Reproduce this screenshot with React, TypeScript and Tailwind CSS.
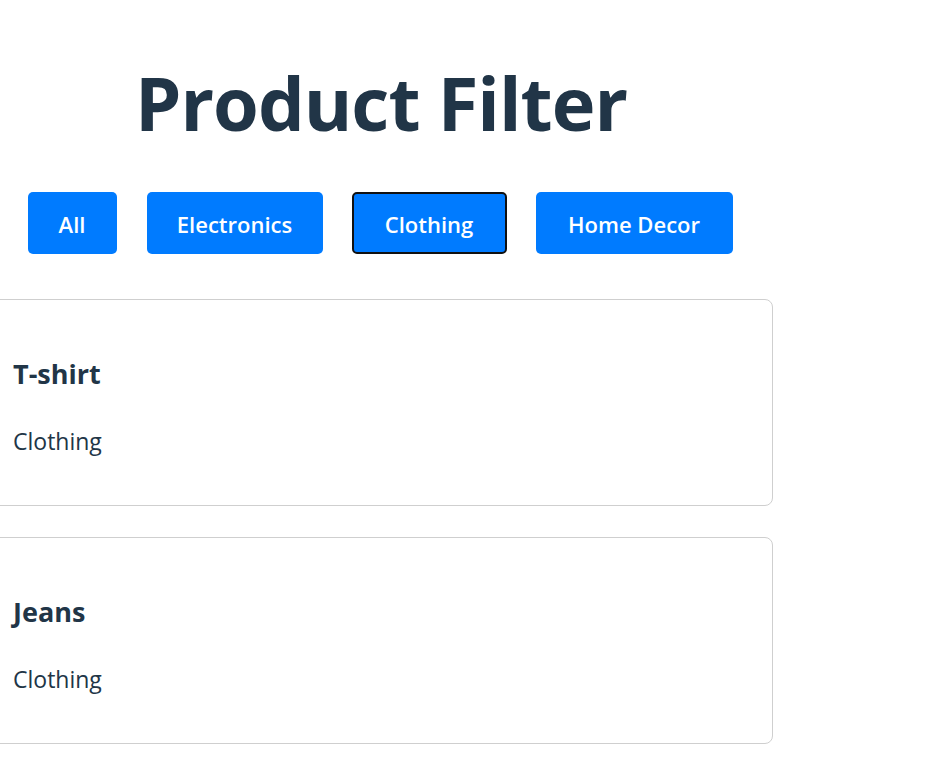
export default function App() {
  const cats = [
    { name: "All", w: "w-[89px]", active: false },
    { name: "Electronics", w: "w-[176px] ml-[1px]", active: false },
    { name: "Clothing", w: "w-[155px]", active: true },
    { name: "Home Decor", w: "w-[197px]", active: false },
  ];
  const items = ["T-shirt", "Jeans"];
  return (
    <div
      className="min-h-[771px] bg-white text-[#213547] overflow-hidden"
      style={{ fontFamily: '"Open Sans", "Noto Sans", sans-serif' }}
    >
      <div className="w-[784px] ml-[-11px] flex flex-col items-center">
        <h1 className="mt-[51px] h-[104px] flex items-center text-[74px] font-bold leading-none tracking-[-1px]">
          Product Filter
        </h1>
        <div className="mt-[37px] flex gap-[29px] -translate-x-[1px]">
          {cats.map((c) => (
            <button
              key={c.name}
              className={`${c.w} h-[62px] pt-[3px] rounded-[5px] bg-[#007bff] text-white text-[22px] font-semibold ${
                c.active ? "border-2 border-[#111]" : "border-2 border-transparent"
              }`}
            >
              {c.name}
            </button>
          ))}
        </div>
        <div className="mt-[45px] w-full flex flex-col gap-[31px]">
          {items.map((it) => (
            <div
              key={it}
              className="h-[207px] w-full rounded-[8px] border border-[#cfcfcf] pl-[23px] flex flex-col"
            >
              <div className="mt-[56px] h-[36px] flex items-center text-[27px] font-bold">
                {it}
              </div>
              <div className="mt-[31px] h-[36px] flex items-center text-[23px]">
                Clothing
              </div>
            </div>
          ))}
        </div>
      </div>
    </div>
  );
}
